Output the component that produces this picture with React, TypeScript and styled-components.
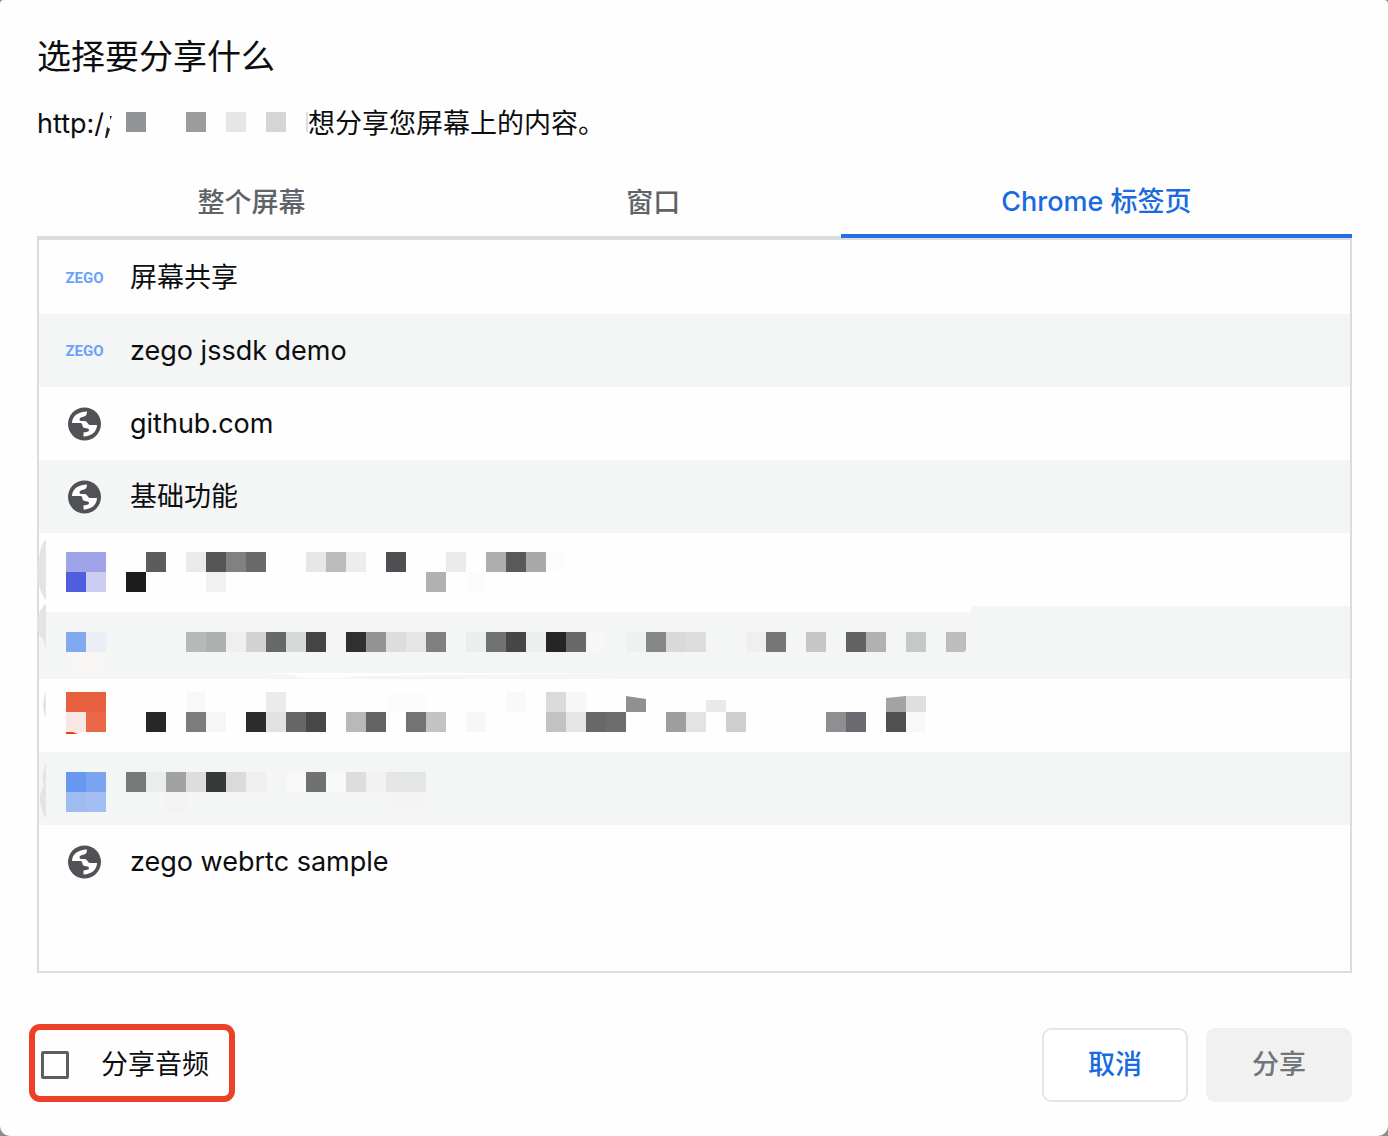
import React from "react";
import styled, { createGlobalStyle } from "styled-components";

const GlobalStyle = createGlobalStyle`
  * { box-sizing: border-box; }
  body { margin: 0; background: #8c8c8c; }
`;

const Dialog = styled.main`
  display: flex;
  flex-direction: column;
  min-height: 100vh;
  padding: 35px 36px 34px 37px;
  border-radius: 4px 4px 10px 10px;
  background: #fefefe;
  color: #0c0d0f;
  font-family: Inter, "Noto Sans CJK SC", sans-serif;
  font-size: 27px;
  line-height: 40px;
`;

const Title = styled.h1`
  margin: 0;
  font-size: 34px;
  font-weight: 400;
  line-height: 44px;
`;

const Subtitle = styled.p`
  display: flex;
  margin: 25px 0 0;
`;

const Tabs = styled.div`
  display: flex;
  margin-top: 22px;
`;

const Tab = styled.button<{ $active?: boolean }>`
  flex: 1 1 auto;
  height: 72px;
  padding: 4px 0 0;
  border: 0;
  border-bottom: ${(p) => (p.$active ? "4px solid #266fe2" : "2px solid #dadce0")};
  background: none;
  color: ${(p) => (p.$active ? "#1a6ae0" : "#5f6368")};
  font: inherit;
  font-weight: 500;
`;

const SourceList = styled.ul`
  flex: 1;
  margin: 0;
  padding: 1px 0 0;
  border: 2px solid #dadce0;
  list-style: none;
`;

const SourceRow = styled.li`
  display: flex;
  height: 73px;
  &:nth-child(even) { background: #f4f5f5; }
`;

const SourceButton = styled.button`
  display: flex;
  flex: 1;
  align-items: center;
  gap: 24px;
  padding: 0 27px;
  border: 0;
  background: none;
  color: inherit;
  font: inherit;
`;

const SourceIcon = styled.span`
  display: flex;
  width: 40px;
  padding-right: 3px;
  justify-content: center;
`;

const ZegoMark = styled.span`
  color: #6ba2fb;
  font: 700 15px/20px Roboto, sans-serif;
`;

const Drawing = styled.svg`
  display: block;
  flex: none;
  overflow: visible;
`;

const Footer = styled.footer`
  display: flex;
  align-items: flex-end;
  gap: 18px;
  margin: 51px 0 0 -8px;
`;

const AudioOption = styled.label`
  display: flex;
  align-items: center;
  gap: 32px;
  height: 78px;
  margin-right: auto;
  padding: 4px 20px 0 6px;
  border: 6px solid #ec4126;
  border-radius: 11px;
`;

const Checkbox = styled.input`
  width: 28px;
  height: 28px;
  margin: 0;
  border: 3px solid #5b5f65;
  border-radius: 2px;
  appearance: none;
  background: #fff;
  &:checked { background: #1a73e8; }
`;

const ActionButton = styled.button<{ $muted?: boolean }>`
  width: 146px;
  height: 74px;
  padding: 0;
  border: 2px solid ${(p) => (p.$muted ? "#f1f1f1" : "#e4e5e9")};
  border-radius: 9px;
  background: ${(p) => (p.$muted ? "#f1f1f1" : "#fff")};
  color: ${(p) => (p.$muted ? "#72767b" : "#1a6ae0")};
  font: inherit;
  font-weight: 500;
`;

type Cell = [column: number, y: number, color: string, span?: number];

const CELL = 20;

/* Each hidden title is a strip of square cells laid on a 20px grid. */
const Mosaic = ({ cells, children }: { cells: Cell[]; children?: React.ReactNode }) => (
  <Drawing width="932" height="73" viewBox="0 0 932 73" aria-hidden="true">
    {children}
    {cells.map(([column, y, color, span = 1]) => (
      <rect key={`${column}-${y}`} x={27 + column * CELL} y={y} width={CELL * span} height={CELL} fill={color} />
    ))}
  </Drawing>
);

const Globe = () => (
  <Drawing width="34" height="34" viewBox="0 0 34 34" aria-hidden="true">
    <circle cx="16.500" cy="17" r="16.500" fill="#505256" />
    <path
      d="M4 16C4 9.500 10 4.500 19 4.500C19 7.500 18 9 16 9.500C13.500 10 11.500 10.500 11.500 12.500C11.500 14.500 14 14 16.500 14C19.500 14 19.500 17.500 22 18H29C29 24.500 23.500 29.500 15.500 29.500V25.500C18 25 21 25 21 23C21 21 17 21.500 15.500 20.500C14 19.500 15 16.500 12.500 16Z"
      fill="#fff"
    />
  </Drawing>
);

const Zego = () => <ZegoMark>ZEGO</ZegoMark>;

const Source = ({ icon, name }: { icon: React.ReactNode; name: string }) => (
  <SourceRow>
    <SourceButton type="button">
      <SourceIcon>{icon}</SourceIcon>
      {name}
    </SourceButton>
  </SourceRow>
);

const hiddenA: Cell[] = [
  [0, 19, "#9fa4e9", 2], [0, 39, "#4f5edc"], [1, 39, "#cccdf3"],
  [3, 39, "#1c1c1c"], [4, 19, "#5c5c5c"], [6, 19, "#eaeaea"], [7, 19, "#555658"],
  [8, 19, "#808183"], [9, 19, "#6a6a6a"], [7, 39, "#f1f1f1"], [12, 19, "#e7e7e7"],
  [13, 19, "#babbbd"], [14, 19, "#ededed"], [16, 19, "#4e4f53"], [18, 39, "#b1b1b1"],
  [19, 19, "#eaecec"], [20, 39, "#fcfcfc"], [21, 19, "#aeaeae"], [22, 19, "#595959"],
  [23, 19, "#a9a9a9"], [24, 19, "#fcfcfc"],
];

const hiddenB: Cell[] = [
  [0, 26, "#82a9f0"], [1, 26, "#ebeef5"], [0, 46, "#f7f6f5", 2],
  [6, 26, "#b7b8ba"], [7, 26, "#aeb0af"], [8, 26, "#efefef"], [9, 26, "#d3d3d3"],
  [10, 26, "#67686a"], [11, 26, "#d7d9d8"], [12, 26, "#444444"], [14, 26, "#303030"],
  [15, 26, "#949494"], [16, 26, "#dddddd"], [17, 26, "#e5e5e5"], [18, 26, "#808082"],
  [20, 26, "#ecedef"], [21, 26, "#717274"], [22, 26, "#474749"], [23, 26, "#edefee"],
  [24, 26, "#252525"], [25, 26, "#686868"], [26, 26, "#f7f7f7"], [28, 26, "#eff1f0"],
  [29, 26, "#868886"], [30, 26, "#d9d9d9"], [31, 26, "#dddddd"], [34, 26, "#efefef"],
  [35, 26, "#767676"], [37, 26, "#c6c6c6"], [39, 26, "#626264"], [40, 26, "#b1b1b1"],
  [42, 26, "#c6c8c7"],
];

const hiddenC: Cell[] = [
  [0, 13, "#e96040", 2], [0, 33, "#f9e7e4"], [1, 33, "#ea6848"],
  [4, 33, "#272727"], [6, 13, "#f8f8f8"], [6, 33, "#7c7c7e"], [7, 33, "#f6f6f6"],
  [9, 33, "#2b2c2c"], [10, 13, "#ebebeb"], [10, 33, "#e1e1e1"], [11, 33, "#656668"],
  [12, 33, "#484848"], [14, 33, "#b9b9b9"], [15, 33, "#646467"], [16, 13, "#fcfcfc", 2],
  [17, 33, "#737376"], [18, 33, "#c3c3c3"], [20, 33, "#f7f7f7"], [22, 13, "#f9f9f9"],
  [24, 13, "#dadad8"], [25, 13, "#f7f7f7"], [24, 33, "#c2c2c2"], [25, 33, "#e5e5e5"],
  [26, 33, "#67686a"], [27, 33, "#6d6d6d"], [30, 33, "#9e9ea0"], [31, 33, "#e3e3e3"],
  [33, 33, "#cecece"], [38, 33, "#8e8f91"], [39, 33, "#6a6b70"], [41, 33, "#505050"],
  [42, 33, "#f8f8f8"],
];

const hiddenD: Cell[] = [
  [0, 20, "#6798f1"], [1, 20, "#7aa3f0"], [0, 40, "#9fbcf2"], [1, 40, "#a4bef1"],
  [3, 20, "#78797b"], [4, 20, "#ebecee"], [5, 20, "#a1a2a4"], [6, 20, "#dcdddc"],
  [7, 20, "#38393b"], [8, 20, "#dadada"], [9, 20, "#eeefee"], [11, 20, "#f8f8f8"],
  [12, 20, "#707173"], [13, 20, "#f7f8fa"], [14, 20, "#dddddd"], [15, 20, "#f2f2f2"],
  [16, 20, "#e4e6e5", 2], [5, 40, "#f3f3f3"], [16, 40, "#f3f4f3", 2],
];

const EDGE = "#e2e4e6";

export default function App() {
  return (
    <>
      <GlobalStyle />
      <Dialog>
        <Title>选择要分享什么</Title>
        <Subtitle>
          http:/
          <Drawing width="204" height="40" viewBox="0 0 204 40" aria-hidden="true">
            <path d="M3 23L6 25L3 34L1 34Z M6 12L8 12L6 16Z" fill="#222" />
            <rect x="22" y="8" width="20" height="20" fill="#939496" />
            <rect x="82" y="8" width="20" height="20" fill="#9b9d9c" />
            <rect x="122" y="8" width="20" height="20" fill="#e6e6e6" />
            <rect x="162" y="8" width="20" height="20" fill="#d5d5d5" />
            <rect x="202" y="8" width="2" height="20" fill="#dddddd" />
          </Drawing>
          想分享您屏幕上的内容。
        </Subtitle>

        <Tabs role="tablist">
          <Tab type="button" role="tab" aria-selected="false">整个屏幕</Tab>
          <Tab type="button" role="tab" aria-selected="false">窗口</Tab>
          <Tab type="button" role="tab" aria-selected="true" $active>Chrome 标签页</Tab>
        </Tabs>

        <SourceList>
          <Source icon={<Zego />} name="屏幕共享" />
          <Source icon={<Zego />} name="zego jssdk demo" />
          <Source icon={<Globe />} name="github.com" />
          <Source icon={<Globe />} name="基础功能" />
          <SourceRow>
            <Mosaic cells={hiddenA}>
              <path d="M7 6Q1 12 0 26Q-4 40 0 52Q2 62 7 67Z" fill={EDGE} />
            </Mosaic>
          </SourceRow>
          <SourceRow>
            <Mosaic cells={hiddenB}>
              <path d="M7 0H932V6H7Z M210 67H585L440 69L320 70Q290 74 260 71Q250 67 210 67Z" fill="#fefefe" />
              <path d="M7 -4Q-5 12 -1 24Q1 32 5 34L7 44Z" fill={EDGE} />
              <path d="M0 -11L7 -3L0 5Z" fill="#fefefe" />
              <path d="M907 26H927V44L925 46H907Z" fill="#bdbdbd" />
            </Mosaic>
          </SourceRow>
          <SourceRow>
            <Mosaic cells={hiddenC}>
              <path d="M7 13Q1 25 7 39Z" fill={EDGE} />
              <path d="M587 17L607 20V33H587Z" fill="#8f9092" />
              <path d="M667 21H687V33H667Z" fill="#e9e9e9" />
              <path d="M847 19L867 17V33H847Z" fill="#a3a3a5" />
              <path d="M867 17H887V33H867Z" fill="#dfdfdf" />
              <path d="M27 53H34L39 55H27Z" fill="#e8400f" />
            </Mosaic>
          </SourceRow>
          <SourceRow>
            <Mosaic cells={hiddenD}>
              <path d="M7 12Q1 24 5 33Q-4 48 7 67Z" fill={EDGE} />
            </Mosaic>
          </SourceRow>
          <Source icon={<Globe />} name="zego webrtc sample" />
        </SourceList>

        <Footer>
          <AudioOption>
            <Checkbox type="checkbox" />
            分享音频
          </AudioOption>
          <ActionButton type="button">取消</ActionButton>
          <ActionButton type="button" $muted>分享</ActionButton>
        </Footer>
      </Dialog>
    </>
  );
}
